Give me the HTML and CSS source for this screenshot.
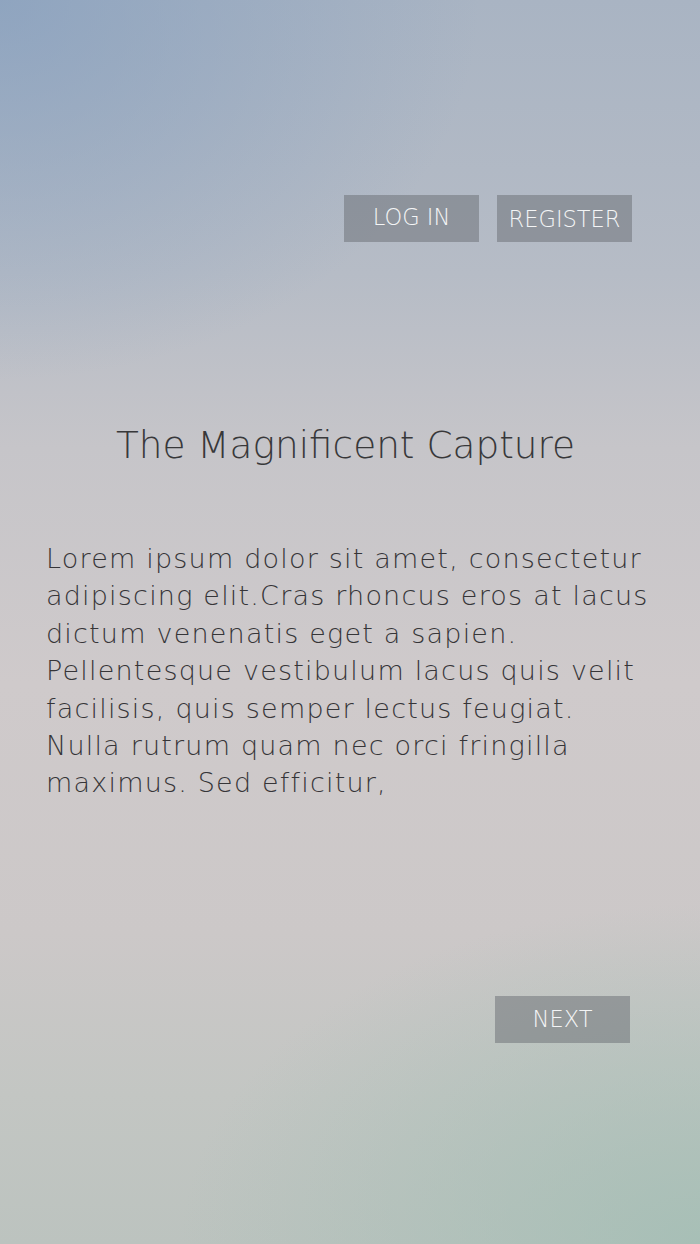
FILE: index.html
```html
<!DOCTYPE html>
<html lang="en">
<head>
<meta charset="utf-8">
<title>The Magnificent Capture</title>
<link rel="stylesheet" href="styles.css">
</head>
<body>
<main class="screen">
  <nav class="auth">
    <button class="btn btn-login">LOG IN</button>
    <button class="btn btn-register">REGISTER</button>
  </nav>
  <h1 class="title">The Magnificent Capture</h1>
  <p class="intro">Lorem ipsum dolor sit amet, consectetur adipiscing elit.Cras rhoncus eros at lacus dictum venenatis eget a sapien. Pellentesque vestibulum lacus quis velit facilisis, quis semper lectus feugiat. Nulla rutrum quam nec orci fringilla maximus. Sed efficitur,</p>
  <div class="actions">
    <button class="btn btn-next">NEXT</button>
  </div>
</main>
</body>
</html>
```
FILE: styles.css
```css
html, body {
  margin: 0;
  padding: 0;
}
body {
  width: 700px;
  min-height: 1244px;
  font-family: "DejaVu Sans", "Open Sans", sans-serif;
  font-weight: 200;
  background:
    radial-gradient(ellipse 480px 380px at 0% 0%, rgba(132,158,190,0.7), rgba(132,158,190,0) 100%),
    radial-gradient(ellipse 520px 340px at 100% 100%, rgba(162,190,180,0.8), rgba(162,190,180,0) 100%),
    linear-gradient(180deg, #a9b4c3 0%, #b6bcc6 22%, #c6c5c9 36%, #cfcacb 55%, #ccc8c8 75%, #c3c6c3 88%, #bcc3bf 100%);
}
.screen {
  display: flex;
  flex-direction: column;
  min-height: 1244px;
  box-sizing: border-box;
}
.auth {
  display: flex;
  justify-content: flex-end;
  gap: 18px;
  padding: 195px 68px 0 0;
}
.btn {
  width: 135px;
  height: 47px;
  border: 0;
  margin: 0;
  padding: 0;
  background: rgba(104,108,114,0.5);
  color: #f4f5f6;
  font-family: "DejaVu Sans", "Open Sans", sans-serif;
  font-weight: 200;
  font-size: 22.5px;
  letter-spacing: 0;
  cursor: pointer;
}
.btn-login {
  padding-bottom: 4px;
}
.title {
  margin: 180px 0 0;
  padding-right: 9px;
  text-align: center;
  font-size: 37.4px;
  line-height: 46px;
  font-weight: 200;
  color: #38383a;
}
.intro {
  margin: 72px 0 0;
  padding: 0 46px;
  font-size: 27px;
  line-height: 37.4px;
  letter-spacing: 1.2px;
  color: #363538;
}
.actions {
  display: flex;
  justify-content: flex-end;
  padding: 194px 70px 0 0;
}
```
